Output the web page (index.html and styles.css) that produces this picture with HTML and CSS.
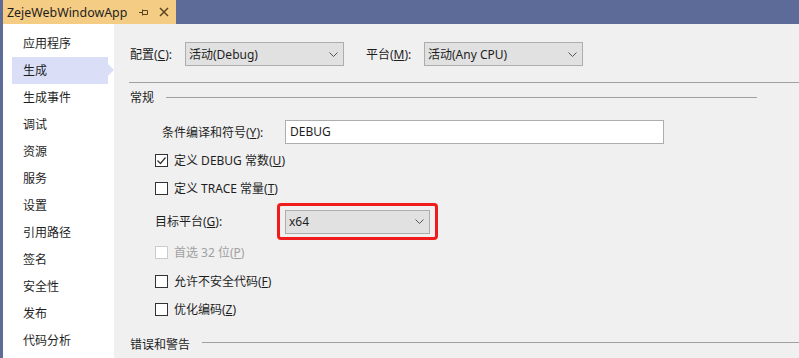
FILE: index.html
```html
<!DOCTYPE html>
<html lang="zh-CN">
<head>
    <meta charset="UTF-8">
    <title>ZejeWebWindowApp - 生成</title>
    <link rel="stylesheet" href="styles.css">
</head>
<body>
    <div class="window">
        <div class="tabbar">
            <div class="tab">
                <span class="tab-title">ZejeWebWindowApp</span>
                <!-- pin -->
                <svg class="tab-icon pin" width="10" height="9" viewBox="0 0 10 9">
                    <path d="M0 4.5h3.5M3.5 1.5v6M3.5 2.5h5v4h-5" fill="none" stroke="#5a4522" stroke-width="1"/>
                </svg>
                <!-- close -->
                <svg class="tab-icon close" width="10" height="10" viewBox="0 0 10 10">
                    <path d="M1 1l8 8M9 1l-8 8" fill="none" stroke="#5a4522" stroke-width="1.5"/>
                </svg>
            </div>
        </div>

        <div class="body">
            <div class="sidebar">
                <div class="nav-item">应用程序</div>
                <div class="nav-item active">生成</div>
                <div class="nav-item">生成事件</div>
                <div class="nav-item">调试</div>
                <div class="nav-item">资源</div>
                <div class="nav-item">服务</div>
                <div class="nav-item">设置</div>
                <div class="nav-item">引用路径</div>
                <div class="nav-item">签名</div>
                <div class="nav-item">安全性</div>
                <div class="nav-item">发布</div>
                <div class="nav-item">代码分析</div>
            </div>

            <div class="content">
                <div class="config-row">
                    <span class="config-label">配置(<u>C</u>):</span>
                    <div class="combo wide">
                        <span>活动(Debug)</span>
                        <svg class="chevron" width="9" height="5" viewBox="0 0 9 5"><path d="M0.5 0.5l4 4 4-4" fill="none" stroke="#555" stroke-width="1"/></svg>
                    </div>
                    <span class="config-label platform">平台(<u>M</u>):</span>
                    <div class="combo wide">
                        <span>活动(Any CPU)</span>
                        <svg class="chevron" width="9" height="5" viewBox="0 0 9 5"><path d="M0.5 0.5l4 4 4-4" fill="none" stroke="#555" stroke-width="1"/></svg>
                    </div>
                </div>

                <div class="rule"></div>

                <div class="group-head">
                    <span>常规</span>
                    <div class="group-line"></div>
                </div>

                <div class="field-row">
                    <span class="field-label">条件编译和符号(<u>Y</u>):</span>
                    <div class="textbox">DEBUG</div>
                </div>

                <div class="check-row first">
                    <span class="checkbox">
                        <svg width="11" height="11" viewBox="0 0 11 11"><path d="M1.5 5.5l3 3 5-6" fill="none" stroke="#333" stroke-width="1.2"/></svg>
                    </span>
                    <span>定义 DEBUG 常数(<u>U</u>)</span>
                </div>

                <div class="check-row">
                    <span class="checkbox"></span>
                    <span>定义 TRACE 常量(<u>T</u>)</span>
                </div>

                <div class="target-row">
                    <span class="target-label">目标平台(<u>G</u>):</span>
                    <div class="highlight">
                        <div class="combo narrow">
                            <span>x64</span>
                            <svg class="chevron" width="9" height="5" viewBox="0 0 9 5"><path d="M0.5 0.5l4 4 4-4" fill="none" stroke="#555" stroke-width="1"/></svg>
                        </div>
                    </div>
                </div>

                <div class="check-row disabled">
                    <span class="checkbox"></span>
                    <span>首选 32 位(<u>P</u>)</span>
                </div>

                <div class="check-row gap">
                    <span class="checkbox"></span>
                    <span>允许不安全代码(<u>F</u>)</span>
                </div>

                <div class="check-row">
                    <span class="checkbox"></span>
                    <span>优化编码(<u>Z</u>)</span>
                </div>

                <div class="group-head last">
                    <span>错误和警告</span>
                    <div class="group-line"></div>
                </div>
            </div>
        </div>
    </div>
</body>
</html>
```

FILE: styles.css
```css
body {
    margin: 0;
    background: #5d6b99;
    font-family: "Noto Sans", "Noto Sans CJK SC", sans-serif;
    font-size: 12px;
    color: #1e1e1e;
}
.window {
    width: 799px;
    height: 358px;
    display: flex;
    flex-direction: column;
    overflow: hidden;
}
u {
    text-decoration-thickness: 1px;
    text-underline-offset: 1px;
}

/* tab strip */
.tabbar {
    height: 24px;
    flex-shrink: 0;
    display: flex;
    padding-left: 3px;
}
.tab {
    width: 173px;
    box-sizing: border-box;
    background: #f5cc84;
    display: flex;
    align-items: center;
    padding: 0 7px 0 4px;
}
.tab-title {
    flex: 1;
    font-size: 12.4px;
    color: #1e1e1e;
}
.tab-icon.pin {
    margin-right: 10px;
    margin-top: 1px;
}

/* left nav */
.body {
    flex: 1;
    display: flex;
    padding-left: 3px;
    min-height: 0;
}
.sidebar {
    width: 111px;
    flex-shrink: 0;
    background: #ffffff;
    padding-top: 6px;
    box-sizing: border-box;
}
.nav-item {
    position: relative;
    height: 27px;
    line-height: 27px;
    width: 96px;
    margin-left: 9px;
    padding-left: 11px;
    box-sizing: border-box;
}
.nav-item.active {
    background: #dadff7;
}
.nav-item.active::after {
    content: '';
    position: absolute;
    left: 100%;
    top: 7px;
    border-left: 6px solid #dadff7;
    border-top: 6px solid transparent;
    border-bottom: 6px solid transparent;
}

/* page */
.content {
    flex: 1;
    background: #f0f0f0;
    padding: 18px 0 0 16px;
}
.config-row {
    height: 24px;
    display: flex;
    align-items: center;
}
.config-label {
    width: 55px;
}
.config-label.platform {
    width: 58px;
    margin-left: 22px;
}
.combo {
    height: 24px;
    box-sizing: border-box;
    background: #e1e1e1;
    border: 1px solid #adadad;
    display: flex;
    align-items: center;
    justify-content: space-between;
    padding: 0 5px 0 3px;
}
.combo.wide {
    width: 159px;
}
.combo.narrow {
    width: 145px;
}
.rule {
    margin: 16px 0 0 -1px;
    height: 1px;
    background: #a0a0a0;
}
.group-head {
    margin-top: 7px;
    height: 14px;
    display: flex;
    align-items: center;
    margin-right: 42px;
}
.group-line {
    flex: 1;
    height: 1px;
    background: #a0a0a0;
    margin-left: 12px;
}
.group-head.last {
    margin-top: 14px;
    margin-right: 0;
}
.group-head.last .group-line {
    margin-top: -3px;
}
.field-row {
    margin-top: 16px;
    height: 24px;
    display: flex;
    align-items: center;
    padding-left: 32px;
}
.field-label {
    width: 123px;
}
.textbox {
    width: 379px;
    height: 24px;
    box-sizing: border-box;
    background: #ffffff;
    border: 1px solid #adadad;
    padding-left: 4px;
    line-height: 22px;
}
.check-row {
    height: 28px;
    display: flex;
    align-items: center;
    padding-left: 25px;
}
.check-row.first {
    margin-top: 2px;
}
.check-row.gap {
    margin-top: 3px;
}
.checkbox {
    width: 13px;
    height: 13px;
    box-sizing: border-box;
    border: 1px solid #333333;
    background: #ffffff;
    margin-right: 6px;
    display: flex;
    align-items: center;
    justify-content: center;
}
.check-row.disabled {
    height: 24px;
    color: #a0a0a0;
}
.check-row.disabled .checkbox {
    border-color: #cccccc;
}
.target-row {
    height: 38px;
    display: flex;
    align-items: center;
    padding-left: 25px;
}
.target-label {
    width: 122px;
}
.highlight {
    border: 3px solid #f01c1c;
    border-radius: 4px;
    padding: 4px 5px 3px;
}
```
